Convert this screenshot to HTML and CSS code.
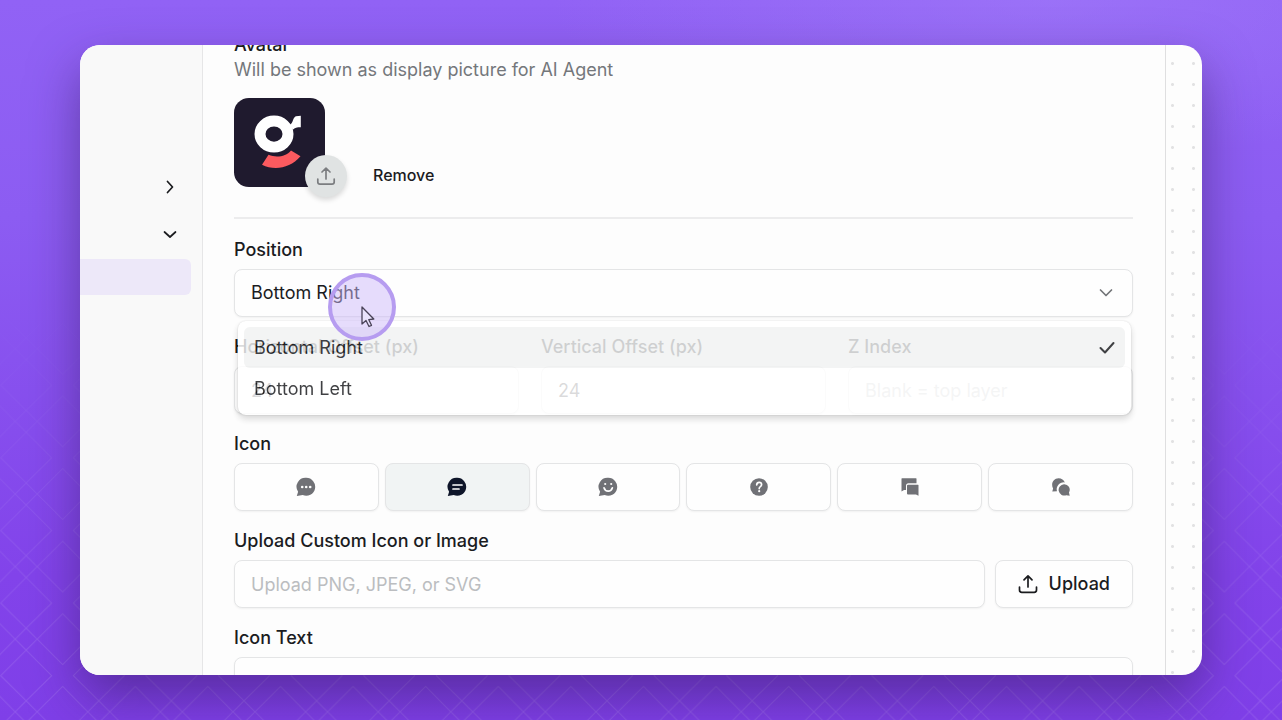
FILE: index.html
```html
<!DOCTYPE html>
<html lang="en">
<head>
    <meta charset="UTF-8">
    <meta name="viewport" content="width=device-width, initial-scale=1.0">
    <title>AI Agent Settings</title>
    <link rel="stylesheet" href="styles.css">
</head>
<body>
    <!-- Diamond pattern behind the window -->
    <svg class="backdrop" aria-hidden="true">
        <defs>
            <pattern id="diamonds" x="26.2" y="494" width="72.6" height="72.6" patternUnits="userSpaceOnUse">
                <path d="M0 11 L25.5 36.5 L0 61.6 M72.6 11 L47.1 36.5 L72.6 61.6 M11 0 L36.5 25.5 L61.6 0 M11 72.6 L36.5 47.1 L61.6 72.6 M0 11 L11 0 M61.6 0 L72.6 11 M0 61.6 L11 72.6 M72.6 61.6 L61.6 72.6" fill="none" stroke="#ffffff" stroke-opacity="0.12"/>
            </pattern>
        </defs>
        <rect width="100%" height="100%" fill="url(#diamonds)"/>
    </svg>

    <div class="window">
        <!-- Sidebar -->
        <nav class="sidebar" aria-label="Sections">
            <button type="button" class="nav-row" aria-label="Expand section">
                <svg width="14" height="14" viewBox="0 0 14 14"><path d="M4.500 1.500 9.500 7l-5 5.500"/></svg>
            </button>
            <button type="button" class="nav-row" aria-label="Collapse section">
                <svg width="14" height="14" viewBox="0 0 14 14"><path d="M1.500 5 7 10l5.500-5"/></svg>
            </button>
            <div class="nav-current"></div>
        </nav>

        <!-- Settings form -->
        <form class="settings">
            <h2 class="label">Avatar</h2>
            <p class="hint">Will be shown as display picture for AI Agent</p>
            <div class="avatar-row">
                <div class="avatar">
                    <svg width="91" height="89" viewBox="0 0 91 90" preserveAspectRatio="none">
                        <rect width="91" height="90" rx="15" fill="#1f1a2e"/>
                        <ellipse cx="40" cy="36.500" rx="14" ry="13.200" fill="none" stroke="#fff" stroke-width="11"/>
                        <path d="M56 27c3-1 3-8 6-8.500l4.800-.5v11.500c-4 0-6 .5-8 2.500z" fill="#fff"/>
                        <path d="M34.500 57.500 28 67.500c12 6 28 4 38.500-8.500L57 53c-5 6-14 8-22.500 4.500z" fill="#fb5a5f"/>
                    </svg>
                    <button type="button" class="avatar-upload" aria-label="Upload avatar">
                        <svg width="20" height="20" viewBox="0 0 20 20"><path d="M10 13V2.500M6 6 10 2.200 14 6M1.800 13v3q0 2.200 2.200 2.200h12q2.200 0 2.200-2.200v-3"/></svg>
                    </button>
                </div>
                <button type="button" class="remove">Remove</button>
            </div>

            <hr class="divider">

            <div class="field position">
                <label class="label" for="position">Position</label>
                <div class="select">
                    <select class="control" id="position">
                        <option selected>Bottom Right</option>
                        <option>Bottom Left</option>
                    </select>
                    <svg class="chevron" width="14" height="14" viewBox="0 0 14 14"><path d="M1.500 4 7 9.500l5.500-5.500"/></svg>
                </div>
                <ul class="menu" role="listbox" aria-label="Position">
                    <li class="menu-item active" role="option" aria-selected="true">
                        Bottom Right
                        <svg width="16" height="14" viewBox="0 0 16 14"><path d="M1.500 7 6 11.500 14.500 2"/></svg>
                    </li>
                    <li class="menu-item" role="option" aria-selected="false">Bottom Left</li>
                </ul>
                <!-- Click highlight with the pointer -->
                <div class="click">
                    <svg width="14" height="22" viewBox="0 0 14 22"><path d="M1 1v17l4-3.500 3 6 2.500-1.200-2.700-5.600 5-.7z"/></svg>
                </div>
            </div>

            <div class="offsets">
                <div class="field">
                    <label class="label" for="offset-x">Horizontal Offset (px)</label>
                    <input class="control" type="text" id="offset-x" value="24">
                </div>
                <div class="field">
                    <label class="label" for="offset-y">Vertical Offset (px)</label>
                    <input class="control" type="text" id="offset-y" value="24">
                </div>
                <div class="field">
                    <label class="label" for="z-index">Z Index</label>
                    <input class="control" type="text" id="z-index" placeholder="Blank = top layer">
                </div>
            </div>

            <div class="field">
                <h2 class="label">Icon</h2>
                <div class="icons">
                    <button type="button" class="icon-option" aria-label="Chat dots">
                        <svg width="20" height="20" viewBox="0 0 20 20">
                            <path d="M10.300.800a9 9 0 1 1-3.600 17.300L.800 19l1.300-4.200A9 9 0 0 1 10.300.800z"/>
                            <g class="cut"><circle cx="6.200" cy="10" r="1.300"/><circle cx="10.200" cy="10" r="1.300"/><circle cx="14.200" cy="10" r="1.300"/></g>
                        </svg>
                    </button>
                    <button type="button" class="icon-option selected" aria-label="Chat lines">
                        <svg width="20" height="20" viewBox="0 0 20 20">
                            <path d="M10.300.800a9 9 0 1 1-3.600 17.300L.800 19l1.300-4.200A9 9 0 0 1 10.300.800z"/>
                            <path class="cut-line" d="M6 8h9M6 12h6"/>
                        </svg>
                    </button>
                    <button type="button" class="icon-option" aria-label="Chat smile">
                        <svg width="20" height="20" viewBox="0 0 20 20">
                            <path d="M10.300.800a9 9 0 1 1-3.600 17.300L.800 19l1.300-4.200A9 9 0 0 1 10.300.800z"/>
                            <g class="cut"><circle cx="7.200" cy="7" r="1.100"/><circle cx="13.200" cy="7" r="1.100"/></g>
                            <path class="cut-line" d="M6 10.800q1 3.400 4.200 3.400t4.200-3.400"/>
                        </svg>
                    </button>
                    <button type="button" class="icon-option" aria-label="Question">
                        <svg width="20" height="20" viewBox="0 0 20 20">
                            <circle cx="10" cy="10" r="8.800"/>
                            <path class="cut-line" d="M7.700 7.900q.2-2.500 2.500-2.500t2.400 2.200q0 1.200-1.200 2-1.200.8-1.200 2"/>
                            <circle class="cut" cx="10.200" cy="14.200" r="1.100"/>
                        </svg>
                    </button>
                    <button type="button" class="icon-option" aria-label="Square bubbles">
                        <svg width="20" height="20" viewBox="0 0 20 20">
                            <path d="M2 1.300h14q.5 0 .5.500v4.400H8.500q-2.500 0-2.500 2.500V13H4l-2.500 1.500V1.800q0-.5.500-.5z"/>
                            <path d="M8 7.800h10q.5 0 .5.500v10.500L16 17.500H8q-1 0-1-1V8.800q0-1 1-1z"/>
                        </svg>
                    </button>
                    <button type="button" class="icon-option" aria-label="Round bubbles">
                        <svg width="20" height="20" viewBox="0 0 20 20">
                            <path d="M7.500 1.200c3 0 5.500 1.600 6.300 4.300A6.800 6.800 0 0 0 6 14.200L1.300 14.600l.8-3C-.5 6.500 2.500 1.200 7.500 1.200z"/>
                            <path d="M13 7.200a5.500 5.500 0 0 1 5 8.200l.7 3.300-3.300-.5A5.700 5.700 0 1 1 13 7.200z"/>
                        </svg>
                    </button>
                </div>
            </div>

            <div class="field">
                <label class="label" for="custom-icon">Upload Custom Icon or Image</label>
                <div class="upload-row">
                    <input class="control" type="text" id="custom-icon" placeholder="Upload PNG, JPEG, or SVG">
                    <button type="button" class="upload">
                        <svg width="20" height="20" viewBox="0 0 20 20"><path d="M10 13V2M6 5.800 10 1.800 14 5.800M1.500 13v3q0 2.300 2.300 2.300h12.400q2.300 0 2.300-2.300v-3"/></svg>
                        Upload
                    </button>
                </div>
            </div>

            <div class="field">
                <label class="label" for="icon-text">Icon Text</label>
                <input class="control" type="text" id="icon-text">
            </div>
        </form>

        <div class="preview"></div>
    </div>
</body>
</html>
```

FILE: styles.css
```css
* {
    box-sizing: border-box;
}

body {
    margin: 0;
    height: 100vh;
    padding: 45px 80px;
    overflow: hidden;
    font-family: Inter, "Liberation Sans", sans-serif;
    font-size: 18px;
    line-height: 24px;
    color: #1b1c1f;
    background: radial-gradient(ellipse 500px 160px at 82% 0, rgba(164, 128, 250, 0.5), transparent),
        linear-gradient(#9162f5, #8c5cf2 30%, #8243ea 80%, #7f3fe8);
}

/* Pattern fades in towards the bottom */
.backdrop {
    position: absolute;
    inset: 0;
    width: 100%;
    height: 100%;
    -webkit-mask-image: linear-gradient(transparent 40%, #000 90%);
    mask-image: linear-gradient(transparent 40%, #000 90%);
}

.window {
    position: relative;
    display: flex;
    height: 100%;
    overflow: hidden;
    background: #fdfdfd;
    border-radius: 20px;
    box-shadow: 0 22px 50px rgba(50, 25, 90, 0.5);
}

button,
input,
select {
    font: inherit;
    color: inherit;
}

button {
    cursor: pointer;
}

svg {
    display: block;
}

/* Sidebar */
.sidebar {
    flex: 0 0 123px;
    padding-top: 130px;
    background: #f9f9f9;
    border-right: 1px solid #e6e6e7;
}

.nav-row {
    display: flex;
    align-items: center;
    justify-content: flex-end;
    width: 100%;
    height: 24px;
    margin-bottom: 23px;
    padding: 0 25px 0 0;
    border: 0;
    background: none;
}

.nav-row svg,
.chevron {
    fill: none;
    stroke: #1b1c1f;
    stroke-width: 1.7;
    stroke-linecap: round;
    stroke-linejoin: round;
}

.nav-current {
    height: 36px;
    margin-top: -10px;
    margin-right: 11px;
    background: #ede8f9;
    border-radius: 0 6px 6px 0;
}

/* Settings form */
.settings {
    flex: 1;
    min-width: 0;
    margin-top: -13px;
    padding: 0 32px 0 31px;
}

.label {
    display: block;
    margin: 0 0 6px;
    font-size: 18px;
    line-height: 26px;
    font-weight: 500;
    white-space: nowrap;
}

.settings > .label {
    margin-bottom: 0;
}

.hint {
    margin: 0 0 16px;
    color: #74777b;
}

.avatar-row {
    display: flex;
    align-items: flex-end;
    gap: 48px;
}

.avatar {
    position: relative;
}

.avatar-upload {
    position: absolute;
    right: -22px;
    bottom: -10px;
    display: flex;
    align-items: center;
    justify-content: center;
    width: 42px;
    height: 42px;
    padding: 0;
    border: 0;
    border-radius: 50%;
    background: #e0e3e3;
    box-shadow: 0 3px 5px rgba(0, 0, 0, 0.14);
}

.avatar-upload svg,
.upload svg {
    fill: none;
    stroke: #1b1c1f;
    stroke-width: 1.7;
    stroke-linecap: round;
    stroke-linejoin: round;
}

.avatar-upload svg {
    stroke: #7b7d80;
}

.remove {
    padding: 0;
    border: 0;
    background: none;
    font-size: 16px;
    font-weight: 500;
}

.divider {
    margin: 30px 0 18px;
    border: 0;
    border-top: 2px solid #ececed;
}

.field {
    margin-bottom: 17px;
}

.control {
    display: block;
    width: 100%;
    height: 48px;
    padding: 0 16px;
    border: 1px solid #e4e5e6;
    border-radius: 8px;
    background: #fefefe;
    box-shadow: 0 1px 2px rgba(0, 0, 0, 0.05);
    appearance: none;
}

.control::placeholder {
    color: #bbbdc0;
    opacity: 1;
}

.position,
.select {
    position: relative;
}

.chevron {
    position: absolute;
    top: 17px;
    right: 20px;
    stroke: #737578;
}

/* Open menu, half way through its fade */
.menu {
    position: absolute;
    z-index: 1;
    top: 84px;
    left: 4px;
    right: 2px;
    margin: 0;
    padding: 6px;
    list-style: none;
    background: #fff;
    border-radius: 8px;
    box-shadow: 0 0 2px rgba(0, 0, 0, 0.16), 0 4px 7px rgba(0, 0, 0, 0.18);
    opacity: 0.84;
}

.menu-item {
    display: flex;
    align-items: center;
    justify-content: space-between;
    height: 41px;
    padding: 0 10px;
    border-radius: 6px;
}

.menu-item.active {
    background: #f1f2f2;
}

.menu-item svg {
    fill: none;
    stroke: #1b1c1f;
    stroke-width: 2;
    stroke-linecap: round;
    stroke-linejoin: round;
}

.click {
    position: absolute;
    z-index: 2;
    top: 36px;
    left: 94px;
    width: 68px;
    height: 68px;
    padding: 29px 0 0 29px;
    border: 4px solid #b69cf0;
    border-radius: 50%;
    background: rgba(205, 186, 250, 0.5);
}

.click svg {
    fill: #e9e2fb;
    stroke: #4a4358;
    stroke-width: 1.3;
    stroke-linejoin: round;
}

.offsets {
    display: grid;
    grid-template-columns: repeat(3, 1fr);
    column-gap: 22px;
}

/* Icon choices */
.icons {
    display: grid;
    grid-template-columns: repeat(6, 1fr);
    gap: 6px;
}

.icon-option {
    display: flex;
    align-items: center;
    justify-content: center;
    height: 48px;
    padding: 0;
    border: 1px solid #e4e5e6;
    border-radius: 8px;
    background: #fefefe;
    color: #707176;
    box-shadow: 0 1px 2px rgba(0, 0, 0, 0.05);
}

.icon-option svg {
    fill: currentColor;
}

.icon-option .cut {
    fill: #fefefe;
}

.icon-option .cut-line {
    fill: none;
    stroke: #fefefe;
    stroke-width: 1.7;
    stroke-linecap: round;
}

.icon-option.selected {
    background: #f1f4f4;
    color: #0e1529;
}

.upload-row {
    display: flex;
    gap: 10px;
}

.upload-row .control {
    flex: 1;
    min-width: 0;
}

.upload {
    display: flex;
    align-items: center;
    gap: 11px;
    height: 48px;
    padding: 0 22px;
    border: 1px solid #e4e5e6;
    border-radius: 8px;
    background: #fefefe;
    box-shadow: 0 1px 2px rgba(0, 0, 0, 0.05);
    font-weight: 500;
}

/* Dotted preview area */
.preview {
    flex: 0 0 37px;
    border-left: 1px solid #dfdfe0;
    background: radial-gradient(circle, #e2e2e3 1px, transparent 2px) -4px 8px / 21px 21px;
}
```
